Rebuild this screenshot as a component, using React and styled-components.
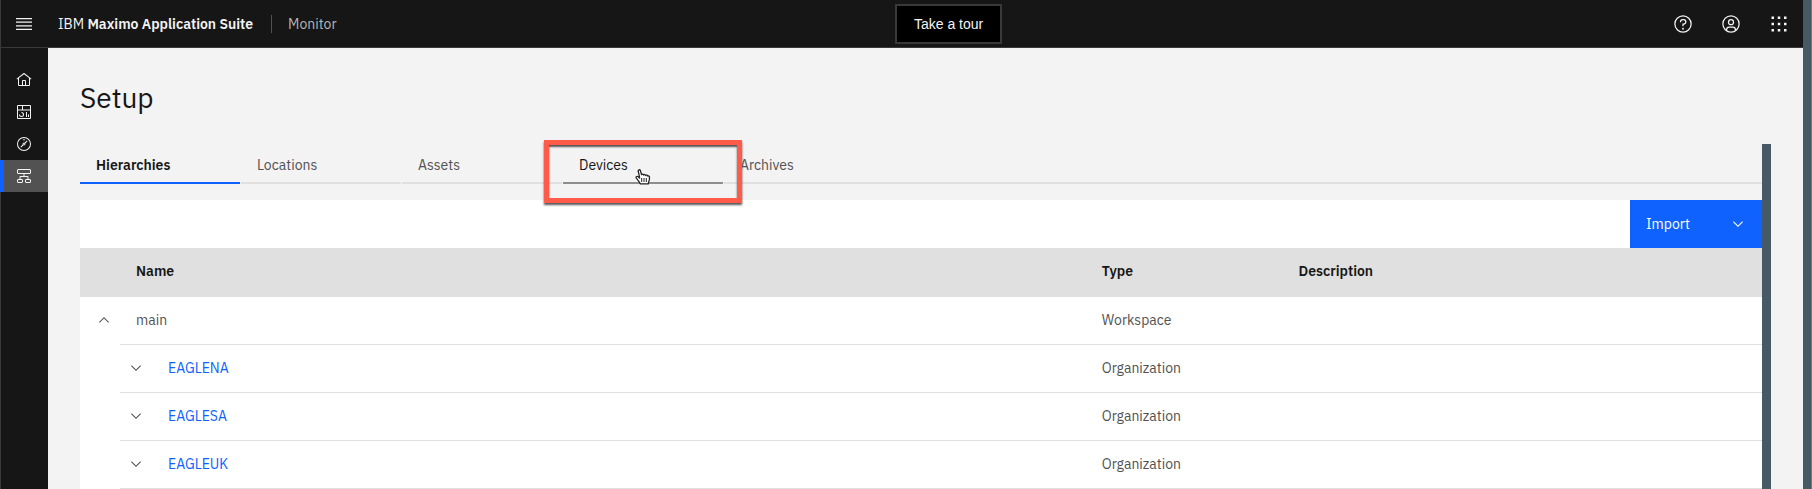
import React from "react";
import styled, { createGlobalStyle, css } from "styled-components";

const GlobalStyle = createGlobalStyle`
  *, *::before, *::after { box-sizing: border-box; }
  body {
    margin: 0;
    background: #f3f3f3;
    color: #161616;
    font-family: "IBM Plex Sans", Roboto, "Liberation Sans", sans-serif;
    font-size: 14px;
    line-height: 18px;
  }
  button { font: inherit; }
  a { text-decoration: none; }
`;

const Window = styled.div`
  display: flex;
  min-height: 100vh;
`;

const WindowEdge = styled.div`
  flex: 0 0 9px;
  background: #455a64;
  border-right: 1px solid #6b7c85;
`;

const Shell = styled.div`
  flex: 1;
  min-width: 0;
  display: flex;
  flex-direction: column;
`;

const Header = styled.header`
  display: grid;
  grid-template-columns: 19fr auto 17fr;
  align-items: center;
  height: 48px;
  background: #161616;
  border-bottom: 1px solid #393939;
  box-shadow: inset 1px 0 #393939;
  color: #f4f4f4;
`;

const Brand = styled.div`
  display: flex;
  align-items: center;
`;

const IconButton = styled.button`
  display: flex;
  align-items: center;
  justify-content: center;
  width: ${(p) => p.$size || 48}px;
  height: ${(p) => p.$size || 48}px;
  padding: 0;
  border: 0;
  background: none;
  color: inherit;
`;

const Product = styled.a`
  padding: 0 18px 0 10px;
  color: #f4f4f4;
  white-space: nowrap;
  strong { font-weight: 600; }
`;

const AppName = styled.span`
  padding: 0 16px;
  border-left: 1px solid #525252;
  color: #b5b5b5;
`;

const TourButton = styled.button`
  height: 40px;
  padding: 0 17px;
  border: 2px solid #393939;
  background: #000;
  color: #f4f4f4;
  font-family: "Liberation Sans", Arial, sans-serif;
`;

const Actions = styled.div`
  display: flex;
  justify-content: flex-end;
`;

const Body = styled.div`
  flex: 1;
  display: flex;
`;

const SideNav = styled.nav`
  flex: 0 0 48px;
  padding-top: 16px;
  background: #161616;
  box-shadow: inset 1px 0 #393939;
`;

const SideLink = styled.a`
  display: flex;
  align-items: center;
  justify-content: center;
  height: 32px;
  color: #f4f4f4;
  ${(p) => p.$active && css`
    background: #525252;
    box-shadow: inset 4px 0 #0f62fe;
  `}
`;

const Main = styled.main`
  flex: 1;
  min-width: 0;
  display: flex;
  flex-direction: column;
  padding: 0 32px;
`;

const Title = styled.h1`
  height: 96px;
  margin: 0;
  padding-top: 32px;
  font-size: 28px;
  line-height: 36px;
  font-weight: 400;
`;

const ContentRow = styled.div`
  flex: 1;
  display: flex;
`;

const Content = styled.div`
  flex: 1;
  min-width: 0;
`;

const ScrollStrip = styled.div`
  flex: 0 0 9px;
  background: #455a64;
`;

const Tabs = styled.div`
  position: relative;
  display: flex;
  gap: 1px;
  height: 40px;
  margin-bottom: 16px;
  &::after {
    content: "";
    flex: 1;
    margin-left: -1px;
    border-bottom: 2px solid #e0e0e0;
  }
`;

const Tab = styled.button`
  width: 160px;
  padding: 4px 16px 0;
  border: 0;
  border-bottom: 2px solid ${(p) => (p.$active ? "#0f62fe" : p.$hovered ? "#8d8d8d" : "#e0e0e0")};
  background: none;
  color: ${(p) => (p.$active || p.$hovered ? "#161616" : "#525252")};
  font-weight: ${(p) => (p.$active ? 600 : 400)};
  text-align: left;
`;

const Highlight = styled.div`
  position: absolute;
  left: 464px;
  top: -4px;
  width: 198px;
  height: 63px;
  border: 5px solid #ff5a4a;
  box-shadow: 0 2px 2px #555, inset 0 2px 2px #555;
  pointer-events: none;
`;

const Pointer = styled.svg`
  position: absolute;
  left: 555px;
  top: 24px;
`;

const Toolbar = styled.div`
  display: flex;
  justify-content: flex-end;
  height: 48px;
  background: #fff;
`;

const ImportButton = styled.button`
  display: flex;
  align-items: center;
  justify-content: space-between;
  width: 132px;
  padding: 0 16px;
  border: 0;
  background: #0f62fe;
  color: #fff;
`;

const Table = styled.table`
  width: 100%;
  table-layout: fixed;
  border-collapse: separate;
  border-spacing: 0;
  background: #fff;
`;

const HeadCell = styled.th`
  width: ${(p) => p.$width};
  height: 49px;
  padding: 0 16px 4px;
  padding-left: ${(p) => (p.$first ? 56 : 16)}px;
  background: #e0e0e0;
  font-weight: 600;
  text-align: left;
`;

const Cell = styled.td`
  height: 48px;
  padding: 0 16px 2px;
  border-bottom: 1px solid #e0e0e0;
  color: #525252;
`;

const NameCell = styled(Cell)`
  padding: 0 0 0 40px;
  border-bottom: 0;
`;

const NameContent = styled.div`
  display: flex;
  align-items: center;
  height: 48px;
  padding-bottom: 2px;
  padding-left: ${(p) => (p.$nested ? 0 : 16)}px;
  border-bottom: 1px solid #e0e0e0;
  gap: 16px;
`;

const Expander = styled(IconButton)`
  flex: none;
  margin-left: ${(p) => (p.$nested ? 0 : -48)}px;
`;

const Entity = styled.a`
  color: #0f62fe;
`;

const Icon = ({ size = 16, children }) => (
  <svg width={size} height={size} viewBox="0 0 32 32" fill="currentColor" aria-hidden="true">
    {children}
  </svg>
);

const MenuIcon = () => (
  <svg width="20" height="20" viewBox="0 0 20 20" fill="currentColor" aria-hidden="true">
    <path d="M2 4h16v1.2H2zM2 7.6h16v1.2H2zM2 11.2h16v1.2H2zM2 14.8h16V16H2z" />
  </svg>
);

const HomeIcon = () => (
  <Icon>
    <path d="M16.61,2.21a1,1,0,0,0-1.24,0L1,13.42,2.24,15,4,13.62V26a2,2,0,0,0,2,2H26a2,2,0,0,0,2-2V13.63L29.76,15,31,13.43ZM18,26H14V18h4Zm2,0V18a2,2,0,0,0-2-2H14a2,2,0,0,0-2,2v8H6V12.06L16,4.27l10,7.8V26Z" />
  </Icon>
);

const DashboardIcon = () => (
  <Icon>
    <path d="M24 21h2v5h-2zM20 16h2v10h-2zM11 26a5 5 0 0 1-5-5h2a3 3 0 1 0 3-3v-2a5 5 0 0 1 0 10z" />
    <path d="M28,2H4A2,2,0,0,0,2,4V28a2,2,0,0,0,2,2H28a2,2,0,0,0,2-2V4A2,2,0,0,0,28,2Zm0,9H14V4H28ZM12,4v7H4V4ZM4,28V13H28V28Z" />
  </Icon>
);

const CompassIcon = () => (
  <Icon>
    <path d="M23 10.4 21.6 9l-4.4 4.3a3 3 0 0 0-3.9 3.9L9 21.600 10.400 23l4.400-4.300a3 3 0 0 0 3.900-3.900zM16 17a1 1 0 1 1 1-1 1 1 0 0 1-1 1z" />
    <circle cx="16" cy="7.5" r="1.500" />
    <path d="M16,30A14,14,0,1,1,30,16,14,14,0,0,1,16,30ZM16,4A12,12,0,1,0,28,16,12,12,0,0,0,16,4Z" />
  </Icon>
);

const HierarchyIcon = () => (
  <Icon>
    <g fill="none" stroke="currentColor" strokeWidth="2">
      <rect x="3" y="3" width="26" height="8" rx="1" />
      <rect x="3" y="23" width="10" height="6" rx="1" />
      <rect x="19" y="23" width="10" height="6" rx="1" />
      <path d="M16 11v6M8 23v-6h16v6" />
    </g>
  </Icon>
);

const HelpIcon = () => (
  <Icon size={20}>
    <path d="M16,2A14,14,0,1,0,30,16,14,14,0,0,0,16,2Zm0,26A12,12,0,1,1,28,16,12,12,0,0,1,16,28Z" />
    <circle cx="16" cy="23.5" r="1.5" />
    <path d="M17,8H15.5A4.49,4.49,0,0,0,11,12.5V13h2v-.5A2.5,2.5,0,0,1,15.5,10H17a2.5,2.5,0,0,1,0,5H15v4.5h2V17a4.5,4.5,0,0,0,0-9Z" />
  </Icon>
);

const AvatarIcon = () => (
  <Icon size={20}>
    <path d="M16,8a5,5,0,1,0,5,5A5,5,0,0,0,16,8Zm0,8a3,3,0,1,1,3-3A3,3,0,0,1,16,16Z" />
    <path d="M16,2A14,14,0,1,0,30,16,14,14,0,0,0,16,2ZM10,26.38V25a3,3,0,0,1,3-3h6a3,3,0,0,1,3,3v1.38a11.9,11.9,0,0,1-12,0Zm14-1.46A5,5,0,0,0,19,20H13a5,5,0,0,0-5,4.92,12,12,0,1,1,16,0Z" />
  </Icon>
);

const SwitcherIcon = () => (
  <Icon size={20}>
    <path d="M14 4h4v4h-4zM4 4h4v4H4zM24 4h4v4h-4zM14 14h4v4h-4zM4 14h4v4H4zM24 14h4v4h-4zM14 24h4v4h-4zM4 24h4v4H4zM24 24h4v4h-4z" />
  </Icon>
);

const Chevron = ({ up }) => (
  <svg width="16" height="16" viewBox="0 0 16 16" fill="currentColor" aria-hidden="true">
    <path d={up ? "M8 5l5 5-.7.7L8 6.4l-4.3 4.3L3 10z" : "M8 11L3 6l.7-.7L8 9.6l4.3-4.3.7.7z"} />
  </svg>
);

const HandPointer = () => (
  <Pointer width="16" height="18" viewBox="0 0 16 18" aria-hidden="true">
    <path
      d="M5.2 15.8c-.3-1.2-1.4-2.3-2.1-3.4C2.5 11.4 1.4 10.3 1.1 9.7c-.3-.8.6-1.6 1.5-1.3.8.2 1.4 1.1 2 1.6C4.4 8 3.5 4.5 3.2 3c-.2-1.3 1.7-1.8 2.2-.4l1.1 4.1c.3-.9 1.9-.8 2.1.3.5-.8 1.9-.6 2.1.5.7-.7 1.9-.3 2.1.6.7-.4 1.7.1 1.7 1 .1 2.2-.1 3.7-1 5.2l-.2 1.6z"
      fill="#fff"
      stroke="#222"
      strokeWidth="1.3"
      strokeLinejoin="round"
    />
    <path d="M6.7 10v4M9 10v4M11.3 10v4" stroke="#222" />
  </Pointer>
);

const sideItems = [
  { label: "Home", Glyph: HomeIcon },
  { label: "Dashboards", Glyph: DashboardIcon },
  { label: "Explore", Glyph: CompassIcon },
  { label: "Setup", Glyph: HierarchyIcon, active: true },
];

const tabs = [
  { label: "Hierarchies", active: true },
  { label: "Locations" },
  { label: "Assets" },
  { label: "Devices", hovered: true },
  { label: "Archives" },
];

const rows = [
  { name: "main", type: "Workspace" },
  { name: "EAGLENA", type: "Organization", nested: true },
  { name: "EAGLESA", type: "Organization", nested: true },
  { name: "EAGLEUK", type: "Organization", nested: true },
];

export default function App() {
  return (
    <Window>
      <GlobalStyle />
      <Shell>
        <Header>
          <Brand>
            <IconButton aria-label="Open menu"><MenuIcon /></IconButton>
            <Product href="#">IBM <strong>Maximo Application Suite</strong></Product>
            <AppName>Monitor</AppName>
          </Brand>
          <TourButton>Take a tour</TourButton>
          <Actions>
            <IconButton aria-label="Help"><HelpIcon /></IconButton>
            <IconButton aria-label="Account"><AvatarIcon /></IconButton>
            <IconButton aria-label="Switch application"><SwitcherIcon /></IconButton>
          </Actions>
        </Header>
        <Body>
          <SideNav>
            {sideItems.map(({ label, Glyph, active }) => (
              <SideLink key={label} href="#" aria-label={label} $active={active}>
                <Glyph />
              </SideLink>
            ))}
          </SideNav>
          <Main>
            <Title>Setup</Title>
            <ContentRow>
              <Content>
                <Tabs role="tablist">
                  {tabs.map(({ label, active, hovered }) => (
                    <Tab key={label} role="tab" aria-selected={!!active} $active={active} $hovered={hovered}>
                      {label}
                    </Tab>
                  ))}
                  <Highlight />
                  <HandPointer />
                </Tabs>
                <Toolbar>
                  <ImportButton>Import <Chevron /></ImportButton>
                </Toolbar>
                <Table>
                  <thead>
                    <tr>
                      <HeadCell $first $width="59.8%">Name</HeadCell>
                      <HeadCell $width="11.7%">Type</HeadCell>
                      <HeadCell>Description</HeadCell>
                    </tr>
                  </thead>
                  <tbody>
                    {rows.map(({ name, type, nested }) => (
                      <tr key={name}>
                        <NameCell>
                          <NameContent $nested={nested}>
                            <Expander $size={32} $nested={nested} aria-label={`Toggle ${name}`}>
                              <Chevron up={!nested} />
                            </Expander>
                            {nested ? <Entity href="#">{name}</Entity> : name}
                          </NameContent>
                        </NameCell>
                        <Cell>{type}</Cell>
                        <Cell />
                      </tr>
                    ))}
                  </tbody>
                </Table>
              </Content>
              <ScrollStrip />
            </ContentRow>
          </Main>
        </Body>
      </Shell>
      <WindowEdge />
    </Window>
  );
}
